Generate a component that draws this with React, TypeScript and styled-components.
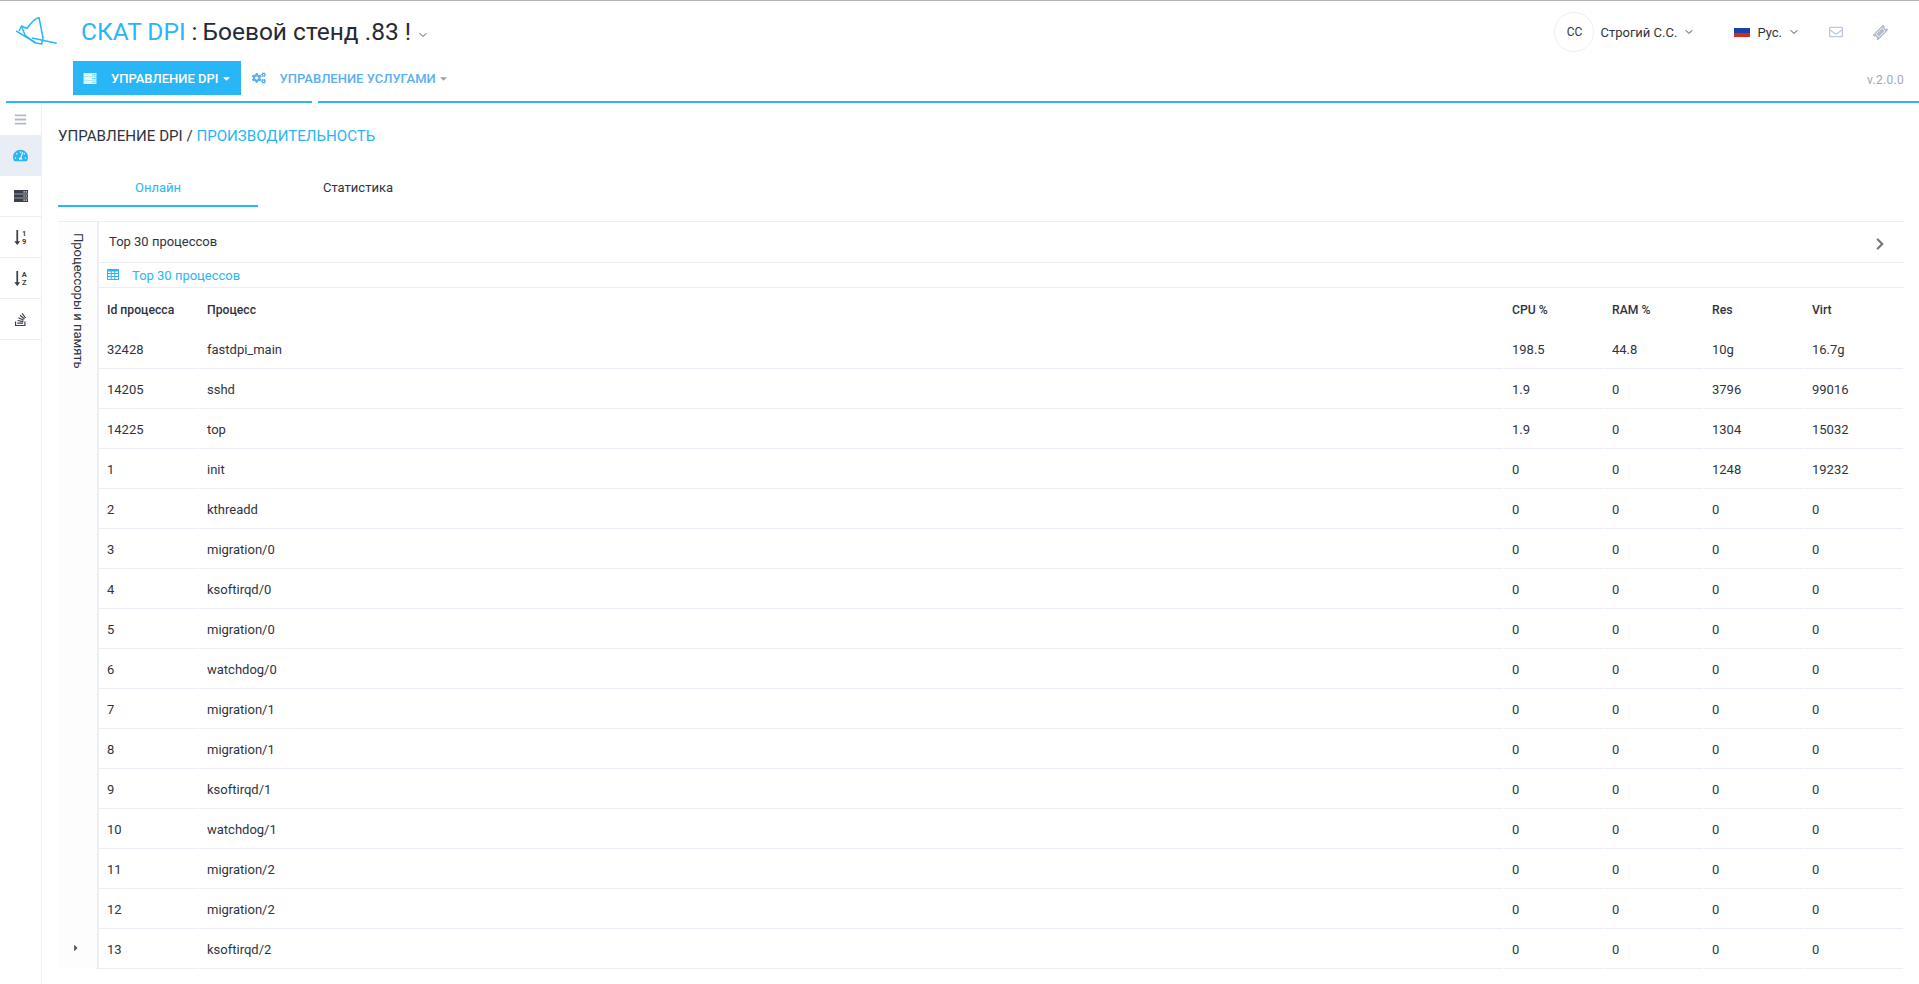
import React from 'react';
import styled, { createGlobalStyle } from 'styled-components';
import {
  FaCogs,
  FaTachometerAlt,
  FaStackOverflow,
  FaRegEnvelope,
  FaBars,
  FaCaretDown,
  FaCaretRight,
} from 'react-icons/fa';
import { FiChevronDown, FiChevronRight } from 'react-icons/fi';

const BLUE = '#29b6f6';
const LINE = '#ebeef5';

const GlobalStyle = createGlobalStyle`
  html, body {
    margin: 0;
    padding: 0;
    background: #fff;
    font-family: Roboto, "Noto Sans", sans-serif;
    font-size: 13px;
    color: #2f3340;
  }
`;

const processes = [
  ['32428', 'fastdpi_main', '198.5', '44.8', '10g', '16.7g'],
  ['14205', 'sshd', '1.9', '0', '3796', '99016'],
  ['14225', 'top', '1.9', '0', '1304', '15032'],
  ['1', 'init', '0', '0', '1248', '19232'],
  ['2', 'kthreadd', '0', '0', '0', '0'],
  ['3', 'migration/0', '0', '0', '0', '0'],
  ['4', 'ksoftirqd/0', '0', '0', '0', '0'],
  ['5', 'migration/0', '0', '0', '0', '0'],
  ['6', 'watchdog/0', '0', '0', '0', '0'],
  ['7', 'migration/1', '0', '0', '0', '0'],
  ['8', 'migration/1', '0', '0', '0', '0'],
  ['9', 'ksoftirqd/1', '0', '0', '0', '0'],
  ['10', 'watchdog/1', '0', '0', '0', '0'],
  ['11', 'migration/2', '0', '0', '0', '0'],
  ['12', 'migration/2', '0', '0', '0', '0'],
  ['13', 'ksoftirqd/2', '0', '0', '0', '0'],
];

const ServerIcon = ({ className, cut }: { className?: string; cut: string }) => (
  <svg className={className} viewBox="0 0 14 12" fill="currentColor">
    <path d="M0 0h14v3.7H0zM0 4.15h14v3.7H0zM0 8.3h14V12H0z" />
    <path d="M9.5 1.3h1.2v1.2H9.5zM11.7 1.3h1.2v1.2h-1.2zM9.5 5.4h1.2v1.2H9.5zM11.7 5.4h1.2v1.2h-1.2zM9.5 9.5h1.2v1.2H9.5zM11.7 9.5h1.2v1.2h-1.2z" fill={cut} />
  </svg>
);

const TableGridIcon = ({ className }: { className?: string }) => (
  <svg className={className} viewBox="0 0 12 11" fill="none" stroke="currentColor" strokeWidth="1">
    <path d="M0.5 0.5h11v10h-11z" />
    <path d="M0 1.5h12" strokeWidth="2" />
    <path d="M0.5 4.5h11M0.5 7.5h11M4.2 2v8.5M7.8 2v8.5" />
  </svg>
);

const TicketGlyph = ({ className }: { className?: string }) => (
  <svg className={className} viewBox="0 0 16 16" fill="currentColor">
    <g transform="rotate(-45 8 8)">
      <path d="M0 4h16v2.4a1.6 1.6 0 0 0 0 3.2V12H0V9.6a1.6 1.6 0 0 0 0-3.2z" />
      <rect x="3.5" y="5.8" width="9" height="4.4" fill="none" stroke="#fff" strokeWidth="0.8" />
    </g>
  </svg>
);

const SortIcon = ({ className, top, bottom }: { className?: string; top: string; bottom: string }) => (
  <svg className={className} viewBox="0 0 13 14" fill="currentColor">
    <path d="M2.2 0h1.6v10.4h2L3 14 .2 10.4h2z" />
    <text x="9.5" y="5.8" fontSize="7" fontWeight="700" textAnchor="middle" fontFamily="Roboto, sans-serif">{top}</text>
    <text x="9.5" y="13" fontSize="7" fontWeight="700" textAnchor="middle" fontFamily="Roboto, sans-serif">{bottom}</text>
  </svg>
);

const Page = styled.div`
  min-height: 984px;
  box-sizing: border-box;
  border-top: 1px solid #b4b4b4;
  display: flex;
  flex-direction: column;
`;

const Header = styled.header`
  height: 100px;
  display: flex;
  flex-direction: column;
`;

const TopRow = styled.div`
  height: 60px;
  box-sizing: border-box;
  padding: 2px 31px 0 16px;
  display: flex;
  align-items: center;
`;

const Logo = styled.svg`
  width: 42px;
  height: 30px;
  margin-right: 23px;
  flex: none;
`;

const Title = styled.div`
  font-size: 24.5px;
  line-height: 28px;
  display: flex;
  align-items: center;
`;

const Brand = styled.span`
  color: ${BLUE};
`;

const Colon = styled.span`
  color: #262a35;
  margin: 0 5px 0 6px;
`;

const TitleRest = styled.span`
  color: #262a35;
`;

const Spacer = styled.div`
  flex: 1;
`;

const Avatar = styled.div`
  width: 38px;
  height: 38px;
  border: 1px solid ${LINE};
  border-radius: 50%;
  display: flex;
  align-items: center;
  justify-content: center;
  font-size: 12px;
  margin-right: 6px;
`;

const UserName = styled.span`
  font-size: 13px;
  margin-right: 6px;
`;

const Chevron = styled(FiChevronDown)`
  width: 12px;
  height: 12px;
  color: #444;
`;

const TitleChevron = styled(FiChevronDown)`
  width: 12px;
  height: 12px;
  color: #555;
  margin: 6px 0 0 6px;
`;

const Flag = styled.div`
  width: 16px;
  height: 9px;
  margin-left: 39px;
  margin-right: 7px;
  background: linear-gradient(#1c3fa8 0 50%, #d52b1e 50% 100%);
`;

const EnvelopeIcon = styled(FaRegEnvelope)`
  width: 14px;
  height: 14px;
  color: #bccadb;
  margin-left: 29px;
`;

const TicketIcon = styled(TicketGlyph)`
  width: 15px;
  height: 15px;
  color: #b3bcc9;
  margin-left: 30px;
`;

const NavRow = styled.nav`
  height: 40px;
  display: flex;
  align-items: flex-start;
  padding: 0 15px 0 73px;
`;

const NavItem = styled.a<{ $active?: boolean }>`
  height: 34px;
  display: flex;
  align-items: center;
  font-size: 13px;
  font-weight: 500;
  text-transform: uppercase;
  color: ${(p) => (p.$active ? '#fff' : '#5aaff0')};
  background: ${(p) => (p.$active ? BLUE : 'transparent')};
  padding: ${(p) => (p.$active ? '0 9px 0 10px' : '0 0 0 11px')};
`;

const NavServer = styled(ServerIcon)`
  width: 14px;
  height: 11px;
  margin-right: 14px;
  color: #e4f6fe;
`;

const NavCogs = styled(FaCogs)`
  width: 14px;
  height: 14px;
  margin-right: 14px;
`;

const NavCaret = styled(FaCaretDown)<{ $active?: boolean }>`
  width: 11px;
  height: 11px;
  margin-left: 2px;
  color: ${(p) => (p.$active ? '#fff' : '#9aa3ad')};
`;

const Version = styled.span`
  margin-top: 12px;
  color: #a3a8b0;
  font-size: 12px;
  letter-spacing: 0.3px;
`;

const BlueLine = styled.div`
  height: 2px;
  display: flex;
  gap: 6px;
  padding-left: 6px;
  flex: none;
`;

const BlueSegment = styled.div<{ $grow?: boolean }>`
  background: ${BLUE};
  width: 306px;
  flex: ${(p) => (p.$grow ? 1 : 'none')};
`;

const Body = styled.div`
  flex: 1;
  display: flex;
`;

const Sidebar = styled.aside`
  width: 41px;
  flex: none;
  border-right: 1px solid ${LINE};
`;

const SideToggle = styled.div`
  height: 32px;
  display: flex;
  align-items: center;
  justify-content: center;
  color: #b4bac4;
  font-size: 13px;
`;

const SideItem = styled.div<{ $active?: boolean }>`
  height: 40px;
  border-bottom: 1px solid ${LINE};
  display: flex;
  align-items: center;
  justify-content: center;
  font-size: 15px;
  background: ${(p) => (p.$active ? '#e9edf5' : '#fff')};
  color: ${(p) => (p.$active ? BLUE : '#3a3f4b')};
`;

const SideServer = styled(ServerIcon)`
  width: 14px;
  height: 12px;
`;

const SideSort = styled(SortIcon)`
  width: 14px;
  height: 15px;
`;

const Main = styled.main`
  flex: 1;
  min-width: 0;
  padding: 0 15px 0 16px;
`;

const Breadcrumb = styled.div`
  font-size: 15.1px;
  line-height: 18px;
  margin-top: 24px;
  color: #2f3340;
`;

const Crumb = styled.span`
  color: ${BLUE};
`;

const Tabs = styled.div`
  display: flex;
  margin-top: 22px;
  height: 40px;
`;

const Tab = styled.div<{ $active?: boolean }>`
  width: 200px;
  height: 32px;
  margin-top: 4px;
  padding-bottom: 2px;
  display: flex;
  align-items: center;
  justify-content: center;
  font-size: 13px;
  color: ${(p) => (p.$active ? BLUE : '#2f3340')};
  border-bottom: 2px solid ${(p) => (p.$active ? BLUE : 'transparent')};
`;

const Panel = styled.section`
  margin-top: 14px;
  border-top: 1px solid ${LINE};
  display: flex;
`;

const SideTabs = styled.div`
  width: 39px;
  flex: none;
  background: #fdfdfd;
  display: flex;
  flex-direction: column;
  align-items: center;
  justify-content: space-between;
  padding: 11px 0 16px;
  border-right: 2px solid ${LINE};
`;

const VerticalLabel = styled.span`
  writing-mode: vertical-rl;
  font-size: 13px;
  line-height: 16px;
`;

const Arrow = styled(FaCaretRight)`
  width: 8px;
  height: 10px;
  color: #555;
  margin-right: 4px;
`;

const Content = styled.div`
  flex: 1;
  min-width: 0;
`;

const PanelTitle = styled.div`
  height: 39px;
  padding: 0 15px 1px 10px;
  border-bottom: 1px solid ${LINE};
  display: flex;
  align-items: center;
  justify-content: space-between;
  font-size: 13px;
`;

const NextIcon = styled(FiChevronRight)`
  width: 18px;
  height: 18px;
  stroke-width: 3;
  color: #777;
  margin-top: 4px;
`;

const TableTitle = styled.div`
  height: 24px;
  border-bottom: 1px solid ${LINE};
  display: flex;
  align-items: center;
  padding-left: 8px;
  font-size: 13px;
  color: ${BLUE};
`;

const TableIcon = styled(TableGridIcon)`
  width: 12px;
  height: 11px;
  margin-right: 13px;
  margin-top: -2px;
`;

const Table = styled.table`
  width: calc(100% + 1px);
  margin-left: -1px;
  table-layout: fixed;
  border-collapse: separate;
  border-spacing: 1px 0;
  font-size: 13px;
`;

const Th = styled.th<{ $wide?: boolean }>`
  height: 41px;
  padding: 2px 8px 0;
  text-align: left;
  font-weight: 500;
  font-size: 12.2px;
  width: ${(p) => (p.$wide ? 'auto' : '99px')};
  box-sizing: border-box;
`;

const Td = styled.td`
  height: 38px;
  padding: 1px 8px 0;
  box-sizing: content-box;
  border-bottom: 1px solid ${LINE};
`;

const App = () => {
  return (
    <>
      <GlobalStyle />
      <Page>
        <Header>
          <TopRow>
            <Logo viewBox="0 0 42 30" fill="none" stroke={BLUE} strokeWidth="1.5" strokeLinejoin="round">
              <path d="M0 14 L20 26 L25.7 27 L27 21 L23 0.5 C18 2 14 7 11 11.5 L5.5 9 L3 14" />
              <path d="M5.5 9 L9 18 L19 26" />
              <path d="M16 21 L40.7 26.3" />
            </Logo>
            <Title>
              <Brand>СКАТ DPI</Brand>
              <Colon>:</Colon>
              <TitleRest>Боевой стенд .83 !</TitleRest>
              <TitleChevron />
            </Title>
            <Spacer />
            <Avatar>СС</Avatar>
            <UserName>Строгий С.С.</UserName>
            <Chevron />
            <Flag />
            <UserName>Рус.</UserName>
            <Chevron />
            <EnvelopeIcon />
            <TicketIcon />
          </TopRow>
          <NavRow>
            <NavItem $active>
              <NavServer cut={BLUE} />
              Управление DPI
              <NavCaret $active />
            </NavItem>
            <NavItem>
              <NavCogs />
              Управление услугами
              <NavCaret />
            </NavItem>
            <Spacer />
            <Version>v.2.0.0</Version>
          </NavRow>
        </Header>
        <BlueLine>
          <BlueSegment />
          <BlueSegment $grow />
        </BlueLine>
        <Body>
          <Sidebar>
            <SideToggle><FaBars /></SideToggle>
            <SideItem $active><FaTachometerAlt /></SideItem>
            <SideItem><SideServer cut="#fff" /></SideItem>
            <SideItem><SideSort top="1" bottom="9" /></SideItem>
            <SideItem><SideSort top="A" bottom="Z" /></SideItem>
            <SideItem><FaStackOverflow /></SideItem>
          </Sidebar>
          <Main>
            <Breadcrumb>
              УПРАВЛЕНИЕ DPI / <Crumb>ПРОИЗВОДИТЕЛЬНОСТЬ</Crumb>
            </Breadcrumb>
            <Tabs>
              <Tab $active>Онлайн</Tab>
              <Tab>Статистика</Tab>
            </Tabs>
            <Panel>
              <SideTabs>
                <VerticalLabel>Процессоры и память</VerticalLabel>
                <Arrow />
              </SideTabs>
              <Content>
                <PanelTitle>
                  Top 30 процессов
                  <NextIcon />
                </PanelTitle>
                <TableTitle>
                  <TableIcon />
                  Top 30 процессов
                </TableTitle>
                <Table>
                  <thead>
                    <tr>
                      <Th>Id процесса</Th>
                      <Th $wide>Процесс</Th>
                      <Th>CPU %</Th>
                      <Th>RAM %</Th>
                      <Th>Res</Th>
                      <Th>Virt</Th>
                    </tr>
                  </thead>
                  <tbody>
                    {processes.map((row, i) => (
                      <tr key={i}>
                        {row.map((cell, j) => (
                          <Td key={j}>{cell}</Td>
                        ))}
                      </tr>
                    ))}
                  </tbody>
                </Table>
              </Content>
            </Panel>
          </Main>
        </Body>
      </Page>
    </>
  );
};

export default App;
